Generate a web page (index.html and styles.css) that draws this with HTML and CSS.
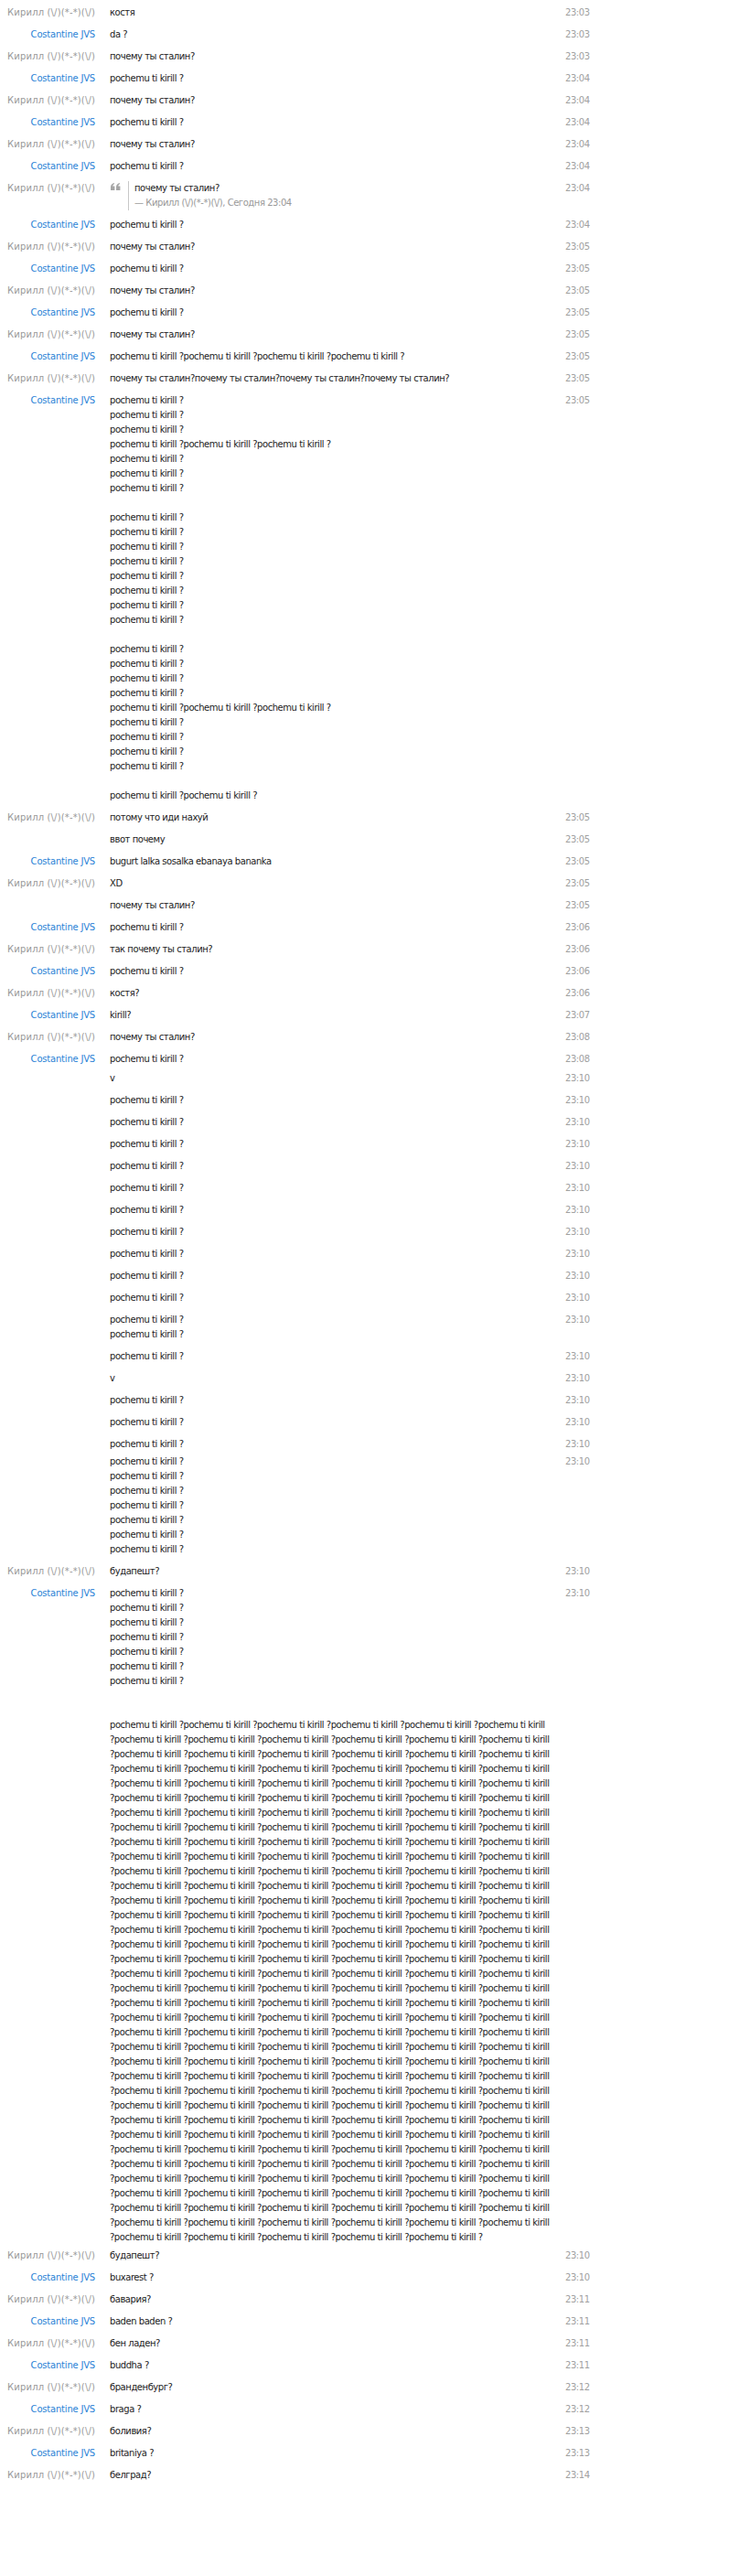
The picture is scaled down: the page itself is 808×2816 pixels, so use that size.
FILE: index.html
```html
<!DOCTYPE html>
<html lang="ru">
<head>
<meta charset="utf-8">
<title>Chat</title>
<link rel="stylesheet" href="styles.css">
</head>
<body>
<div class="chat">
  <div class="msg"><div class="name k">Кирилл (\/)(*-*)(\/)</div><div class="text">костя</div><div class="time">23:03</div></div>
  <div class="msg"><div class="name c">Costantine JVS</div><div class="text">da ?</div><div class="time">23:03</div></div>
  <div class="msg"><div class="name k">Кирилл (\/)(*-*)(\/)</div><div class="text">почему ты сталин?</div><div class="time">23:03</div></div>
  <div class="msg"><div class="name c">Costantine JVS</div><div class="text">pochemu ti kirill ?</div><div class="time">23:04</div></div>
  <div class="msg"><div class="name k">Кирилл (\/)(*-*)(\/)</div><div class="text">почему ты сталин?</div><div class="time">23:04</div></div>
  <div class="msg"><div class="name c">Costantine JVS</div><div class="text">pochemu ti kirill ?</div><div class="time">23:04</div></div>
  <div class="msg"><div class="name k">Кирилл (\/)(*-*)(\/)</div><div class="text">почему ты сталин?</div><div class="time">23:04</div></div>
  <div class="msg"><div class="name c">Costantine JVS</div><div class="text">pochemu ti kirill ?</div><div class="time">23:04</div></div>
  <div class="msg"><div class="name k">Кирилл (\/)(*-*)(\/)</div>
    <div class="text quote">
      <svg class="qicon" width="11" height="8" viewBox="0 0 11 8"><path d="M0 8V4.6C0 2.4 1.3 0.8 3.6 0L4.2 1C3 1.5 2.4 2.3 2.3 3.4H4.4V8Z M6 8V4.6C6 2.4 7.3 0.8 9.6 0L10.2 1C9 1.5 8.4 2.3 8.3 3.4H10.4V8Z" fill="#a6a6a6"/></svg>
      <div class="qbody"><div>почему ты сталин?</div><div class="qauthor">— Кирилл (\/)(*-*)(\/), Сегодня 23:04</div></div>
    </div>
    <div class="time">23:04</div></div>
  <div class="msg"><div class="name c">Costantine JVS</div><div class="text">pochemu ti kirill ?</div><div class="time">23:04</div></div>
  <div class="msg"><div class="name k">Кирилл (\/)(*-*)(\/)</div><div class="text">почему ты сталин?</div><div class="time">23:05</div></div>
  <div class="msg"><div class="name c">Costantine JVS</div><div class="text">pochemu ti kirill ?</div><div class="time">23:05</div></div>
  <div class="msg"><div class="name k">Кирилл (\/)(*-*)(\/)</div><div class="text">почему ты сталин?</div><div class="time">23:05</div></div>
  <div class="msg"><div class="name c">Costantine JVS</div><div class="text">pochemu ti kirill ?</div><div class="time">23:05</div></div>
  <div class="msg"><div class="name k">Кирилл (\/)(*-*)(\/)</div><div class="text">почему ты сталин?</div><div class="time">23:05</div></div>
  <div class="msg"><div class="name c">Costantine JVS</div><div class="text">pochemu ti kirill ?pochemu ti kirill ?pochemu ti kirill ?pochemu ti kirill ?</div><div class="time">23:05</div></div>
  <div class="msg"><div class="name k">Кирилл (\/)(*-*)(\/)</div><div class="text">почему ты сталин?почему ты сталин?почему ты сталин?почему ты сталин?</div><div class="time">23:05</div></div>
  <div class="msg"><div class="name c">Costantine JVS</div><div class="text">
pochemu ti kirill ?<br>
pochemu ti kirill ?<br>
pochemu ti kirill ?<br>
pochemu ti kirill ?pochemu ti kirill ?pochemu ti kirill ?<br>
pochemu ti kirill ?<br>
pochemu ti kirill ?<br>
pochemu ti kirill ?<br>
<br>
pochemu ti kirill ?<br>
pochemu ti kirill ?<br>
pochemu ti kirill ?<br>
pochemu ti kirill ?<br>
pochemu ti kirill ?<br>
pochemu ti kirill ?<br>
pochemu ti kirill ?<br>
pochemu ti kirill ?<br>
<br>
pochemu ti kirill ?<br>
pochemu ti kirill ?<br>
pochemu ti kirill ?<br>
pochemu ti kirill ?<br>
pochemu ti kirill ?pochemu ti kirill ?pochemu ti kirill ?<br>
pochemu ti kirill ?<br>
pochemu ti kirill ?<br>
pochemu ti kirill ?<br>
pochemu ti kirill ?<br>
<br>
pochemu ti kirill ?pochemu ti kirill ?
  </div><div class="time">23:05</div></div>
  <div class="msg"><div class="name k">Кирилл (\/)(*-*)(\/)</div><div class="text">потому что иди нахуй</div><div class="time">23:05</div></div>
  <div class="msg"><div class="name"></div><div class="text">ввот почему</div><div class="time">23:05</div></div>
  <div class="msg"><div class="name c">Costantine JVS</div><div class="text">bugurt lalka sosalka ebanaya bananka</div><div class="time">23:05</div></div>
  <div class="msg"><div class="name k">Кирилл (\/)(*-*)(\/)</div><div class="text">XD</div><div class="time">23:05</div></div>
  <div class="msg"><div class="name"></div><div class="text">почему ты сталин?</div><div class="time">23:05</div></div>
  <div class="msg"><div class="name c">Costantine JVS</div><div class="text">pochemu ti kirill ?</div><div class="time">23:06</div></div>
  <div class="msg"><div class="name k">Кирилл (\/)(*-*)(\/)</div><div class="text">так почему ты сталин?</div><div class="time">23:06</div></div>
  <div class="msg"><div class="name c">Costantine JVS</div><div class="text">pochemu ti kirill ?</div><div class="time">23:06</div></div>
  <div class="msg"><div class="name k">Кирилл (\/)(*-*)(\/)</div><div class="text">костя?</div><div class="time">23:06</div></div>
  <div class="msg"><div class="name c">Costantine JVS</div><div class="text">kirill?</div><div class="time">23:07</div></div>
  <div class="msg"><div class="name k">Кирилл (\/)(*-*)(\/)</div><div class="text">почему ты сталин?</div><div class="time">23:08</div></div>
  <div class="msg"><div class="name c">Costantine JVS</div><div class="text">pochemu ti kirill ?</div><div class="time">23:08</div></div>
  <div class="msg tight3"><div class="name"></div><div class="text">v</div><div class="time">23:10</div></div>
  <div class="msg"><div class="name"></div><div class="text">pochemu ti kirill ?</div><div class="time">23:10</div></div>
  <div class="msg"><div class="name"></div><div class="text">pochemu ti kirill ?</div><div class="time">23:10</div></div>
  <div class="msg"><div class="name"></div><div class="text">pochemu ti kirill ?</div><div class="time">23:10</div></div>
  <div class="msg"><div class="name"></div><div class="text">pochemu ti kirill ?</div><div class="time">23:10</div></div>
  <div class="msg"><div class="name"></div><div class="text">pochemu ti kirill ?</div><div class="time">23:10</div></div>
  <div class="msg"><div class="name"></div><div class="text">pochemu ti kirill ?</div><div class="time">23:10</div></div>
  <div class="msg"><div class="name"></div><div class="text">pochemu ti kirill ?</div><div class="time">23:10</div></div>
  <div class="msg"><div class="name"></div><div class="text">pochemu ti kirill ?</div><div class="time">23:10</div></div>
  <div class="msg"><div class="name"></div><div class="text">pochemu ti kirill ?</div><div class="time">23:10</div></div>
  <div class="msg"><div class="name"></div><div class="text">pochemu ti kirill ?</div><div class="time">23:10</div></div>
  <div class="msg"><div class="name"></div><div class="text">pochemu ti kirill ?<br>pochemu ti kirill ?</div><div class="time">23:10</div></div>
  <div class="msg"><div class="name"></div><div class="text">pochemu ti kirill ?</div><div class="time">23:10</div></div>
  <div class="msg"><div class="name"></div><div class="text">v</div><div class="time">23:10</div></div>
  <div class="msg"><div class="name"></div><div class="text">pochemu ti kirill ?</div><div class="time">23:10</div></div>
  <div class="msg"><div class="name"></div><div class="text">pochemu ti kirill ?</div><div class="time">23:10</div></div>
  <div class="msg"><div class="name"></div><div class="text">pochemu ti kirill ?</div><div class="time">23:10</div></div>
  <div class="msg tight5"><div class="name"></div><div class="text">
pochemu ti kirill ?<br>
pochemu ti kirill ?<br>
pochemu ti kirill ?<br>
pochemu ti kirill ?<br>
pochemu ti kirill ?<br>
pochemu ti kirill ?<br>
pochemu ti kirill ?
  </div><div class="time">23:10</div></div>
  <div class="msg"><div class="name k">Кирилл (\/)(*-*)(\/)</div><div class="text">будапешт?</div><div class="time">23:10</div></div>
  <div class="msg"><div class="name c">Costantine JVS</div><div class="text">
pochemu ti kirill ?<br>
pochemu ti kirill ?<br>
pochemu ti kirill ?<br>
pochemu ti kirill ?<br>
pochemu ti kirill ?<br>
pochemu ti kirill ?<br>
pochemu ti kirill ?<br>
<br>
<br>
pochemu ti kirill ?pochemu ti kirill ?pochemu ti kirill ?pochemu ti kirill ?pochemu ti kirill ?pochemu ti kirill<br>
?pochemu ti kirill ?pochemu ti kirill ?pochemu ti kirill ?pochemu ti kirill ?pochemu ti kirill ?pochemu ti kirill<br>
?pochemu ti kirill ?pochemu ti kirill ?pochemu ti kirill ?pochemu ti kirill ?pochemu ti kirill ?pochemu ti kirill<br>
?pochemu ti kirill ?pochemu ti kirill ?pochemu ti kirill ?pochemu ti kirill ?pochemu ti kirill ?pochemu ti kirill<br>
?pochemu ti kirill ?pochemu ti kirill ?pochemu ti kirill ?pochemu ti kirill ?pochemu ti kirill ?pochemu ti kirill<br>
?pochemu ti kirill ?pochemu ti kirill ?pochemu ti kirill ?pochemu ti kirill ?pochemu ti kirill ?pochemu ti kirill<br>
?pochemu ti kirill ?pochemu ti kirill ?pochemu ti kirill ?pochemu ti kirill ?pochemu ti kirill ?pochemu ti kirill<br>
?pochemu ti kirill ?pochemu ti kirill ?pochemu ti kirill ?pochemu ti kirill ?pochemu ti kirill ?pochemu ti kirill<br>
?pochemu ti kirill ?pochemu ti kirill ?pochemu ti kirill ?pochemu ti kirill ?pochemu ti kirill ?pochemu ti kirill<br>
?pochemu ti kirill ?pochemu ti kirill ?pochemu ti kirill ?pochemu ti kirill ?pochemu ti kirill ?pochemu ti kirill<br>
?pochemu ti kirill ?pochemu ti kirill ?pochemu ti kirill ?pochemu ti kirill ?pochemu ti kirill ?pochemu ti kirill<br>
?pochemu ti kirill ?pochemu ti kirill ?pochemu ti kirill ?pochemu ti kirill ?pochemu ti kirill ?pochemu ti kirill<br>
?pochemu ti kirill ?pochemu ti kirill ?pochemu ti kirill ?pochemu ti kirill ?pochemu ti kirill ?pochemu ti kirill<br>
?pochemu ti kirill ?pochemu ti kirill ?pochemu ti kirill ?pochemu ti kirill ?pochemu ti kirill ?pochemu ti kirill<br>
?pochemu ti kirill ?pochemu ti kirill ?pochemu ti kirill ?pochemu ti kirill ?pochemu ti kirill ?pochemu ti kirill<br>
?pochemu ti kirill ?pochemu ti kirill ?pochemu ti kirill ?pochemu ti kirill ?pochemu ti kirill ?pochemu ti kirill<br>
?pochemu ti kirill ?pochemu ti kirill ?pochemu ti kirill ?pochemu ti kirill ?pochemu ti kirill ?pochemu ti kirill<br>
?pochemu ti kirill ?pochemu ti kirill ?pochemu ti kirill ?pochemu ti kirill ?pochemu ti kirill ?pochemu ti kirill<br>
?pochemu ti kirill ?pochemu ti kirill ?pochemu ti kirill ?pochemu ti kirill ?pochemu ti kirill ?pochemu ti kirill<br>
?pochemu ti kirill ?pochemu ti kirill ?pochemu ti kirill ?pochemu ti kirill ?pochemu ti kirill ?pochemu ti kirill<br>
?pochemu ti kirill ?pochemu ti kirill ?pochemu ti kirill ?pochemu ti kirill ?pochemu ti kirill ?pochemu ti kirill<br>
?pochemu ti kirill ?pochemu ti kirill ?pochemu ti kirill ?pochemu ti kirill ?pochemu ti kirill ?pochemu ti kirill<br>
?pochemu ti kirill ?pochemu ti kirill ?pochemu ti kirill ?pochemu ti kirill ?pochemu ti kirill ?pochemu ti kirill<br>
?pochemu ti kirill ?pochemu ti kirill ?pochemu ti kirill ?pochemu ti kirill ?pochemu ti kirill ?pochemu ti kirill<br>
?pochemu ti kirill ?pochemu ti kirill ?pochemu ti kirill ?pochemu ti kirill ?pochemu ti kirill ?pochemu ti kirill<br>
?pochemu ti kirill ?pochemu ti kirill ?pochemu ti kirill ?pochemu ti kirill ?pochemu ti kirill ?pochemu ti kirill<br>
?pochemu ti kirill ?pochemu ti kirill ?pochemu ti kirill ?pochemu ti kirill ?pochemu ti kirill ?pochemu ti kirill<br>
?pochemu ti kirill ?pochemu ti kirill ?pochemu ti kirill ?pochemu ti kirill ?pochemu ti kirill ?pochemu ti kirill<br>
?pochemu ti kirill ?pochemu ti kirill ?pochemu ti kirill ?pochemu ti kirill ?pochemu ti kirill ?pochemu ti kirill<br>
?pochemu ti kirill ?pochemu ti kirill ?pochemu ti kirill ?pochemu ti kirill ?pochemu ti kirill ?pochemu ti kirill<br>
?pochemu ti kirill ?pochemu ti kirill ?pochemu ti kirill ?pochemu ti kirill ?pochemu ti kirill ?pochemu ti kirill<br>
?pochemu ti kirill ?pochemu ti kirill ?pochemu ti kirill ?pochemu ti kirill ?pochemu ti kirill ?pochemu ti kirill<br>
?pochemu ti kirill ?pochemu ti kirill ?pochemu ti kirill ?pochemu ti kirill ?pochemu ti kirill ?pochemu ti kirill<br>
?pochemu ti kirill ?pochemu ti kirill ?pochemu ti kirill ?pochemu ti kirill ?pochemu ti kirill ?pochemu ti kirill<br>
?pochemu ti kirill ?pochemu ti kirill ?pochemu ti kirill ?pochemu ti kirill ?pochemu ti kirill ?pochemu ti kirill<br>
?pochemu ti kirill ?pochemu ti kirill ?pochemu ti kirill ?pochemu ti kirill ?pochemu ti kirill ?
  </div><div class="time">23:10</div></div>
  <div class="msg tight4"><div class="name k">Кирилл (\/)(*-*)(\/)</div><div class="text">будапешт?</div><div class="time">23:10</div></div>
  <div class="msg"><div class="name c">Costantine JVS</div><div class="text">buxarest ?</div><div class="time">23:10</div></div>
  <div class="msg"><div class="name k">Кирилл (\/)(*-*)(\/)</div><div class="text">бавария?</div><div class="time">23:11</div></div>
  <div class="msg"><div class="name c">Costantine JVS</div><div class="text">baden baden ?</div><div class="time">23:11</div></div>
  <div class="msg"><div class="name k">Кирилл (\/)(*-*)(\/)</div><div class="text">бен ладен?</div><div class="time">23:11</div></div>
  <div class="msg"><div class="name c">Costantine JVS</div><div class="text">buddha ?</div><div class="time">23:11</div></div>
  <div class="msg"><div class="name k">Кирилл (\/)(*-*)(\/)</div><div class="text">бранденбург?</div><div class="time">23:12</div></div>
  <div class="msg"><div class="name c">Costantine JVS</div><div class="text">braga ?</div><div class="time">23:12</div></div>
  <div class="msg"><div class="name k">Кирилл (\/)(*-*)(\/)</div><div class="text">боливия?</div><div class="time">23:13</div></div>
  <div class="msg"><div class="name c">Costantine JVS</div><div class="text">britaniya ?</div><div class="time">23:13</div></div>
  <div class="msg"><div class="name k">Кирилл (\/)(*-*)(\/)</div><div class="text">белград?</div><div class="time">23:14</div></div>
</div>
</body>
</html>
```
FILE: styles.css
```css
html, body {
  margin: 0;
  padding: 0;
  background: #ffffff;
}
body {
  font-family: "DejaVu Sans", "Noto Sans", sans-serif;
  font-size: 10px;
  letter-spacing: -0.45px;
  color: #222222;
}
.chat {
  padding-top: 2px;
}
.msg {
  display: flex;
  align-items: flex-start;
  padding: 4px 0;
  line-height: 16px;
}
.msg.tight3 { margin-top: -3px; }
.msg.tight4 { margin-top: -4px; }
.msg.tight5 { margin-top: -5px; }
.name {
  flex: none;
  width: 104px;
  text-align: right;
  white-space: nowrap;
  letter-spacing: -0.2px;
}
.name.k {
  color: #999999;
  letter-spacing: 0.15px;
}
.name.c { color: #2a82d6; }
.text {
  flex: none;
  width: 495px;
  margin-left: 16px;
  color: #222222;
}
.time {
  flex: none;
  margin-left: 3px;
  color: #a0a0a0;
}
.quote {
  display: flex;
  align-items: flex-start;
}
.qicon {
  flex: none;
  margin-top: 2px;
  margin-left: 1px;
}
.qbody {
  margin-left: 8px;
  padding-left: 6px;
  border-left: 1px solid #c8c8c8;
}
.qauthor {
  color: #999999;
}
```
